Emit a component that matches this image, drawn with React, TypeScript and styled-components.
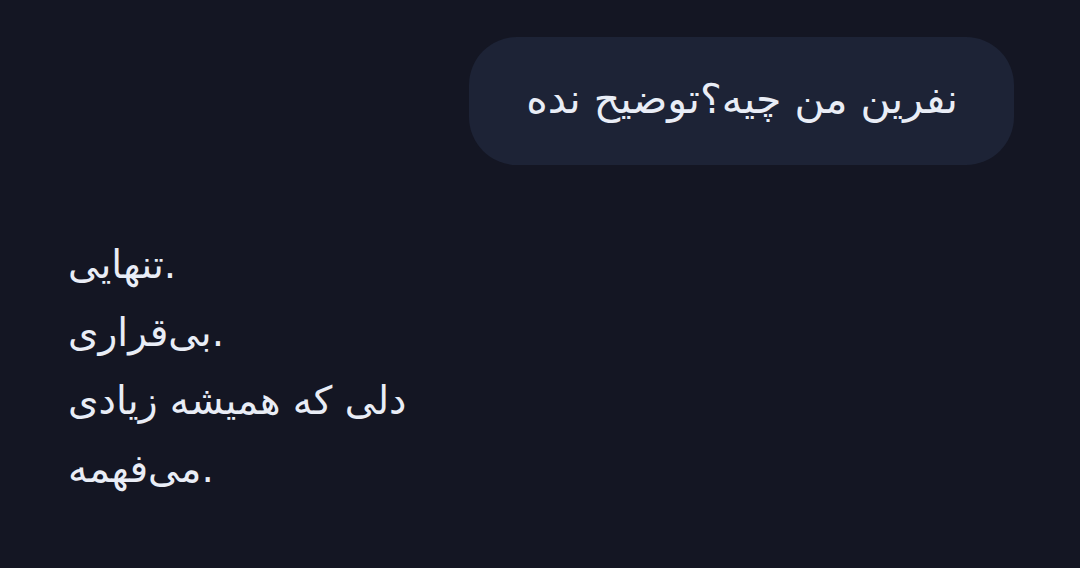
import React from 'react'
import styled, { createGlobalStyle } from 'styled-components'

const GlobalStyle = createGlobalStyle`
  html, body {
    margin: 0;
    padding: 0;
    background: #141623;
  }
  body {
    font-family: "DejaVu Sans", "Noto Sans", sans-serif;
    color: #e9edf6;
  }
`

const Chat = styled.div`
  width: 1080px;
  height: 568px;
  box-sizing: border-box;
  padding: 37px 66px 0 68px;
  display: flex;
  flex-direction: column;
  overflow: hidden;
`

const UserRow = styled.div`
  display: flex;
  justify-content: flex-end;
`

const Bubble = styled.div`
  background: #1d2336;
  border-radius: 48px;
  height: 128px;
  box-sizing: border-box;
  padding: 0 56px 4px 57px;
  display: flex;
  align-items: center;
  font-size: 41px;
  white-space: nowrap;
`

const Reply = styled.div`
  margin-top: 66px;
  font-size: 39px;
  line-height: 68px;
  text-align: left;
`

const Line = styled.div`
  white-space: nowrap;
`

const lines = ['تنهایی.', 'بی‌قراری.', 'دلی که همیشه زیادی', 'می‌فهمه.']

export default function App() {
  return (
    <>
      <GlobalStyle />
      <Chat>
        <UserRow>
          <Bubble>نفرین من چیه؟توضیح نده</Bubble>
        </UserRow>
        <Reply>
          {lines.map(l => (
            <Line key={l}>{l}</Line>
          ))}
        </Reply>
      </Chat>
    </>
  )
}
